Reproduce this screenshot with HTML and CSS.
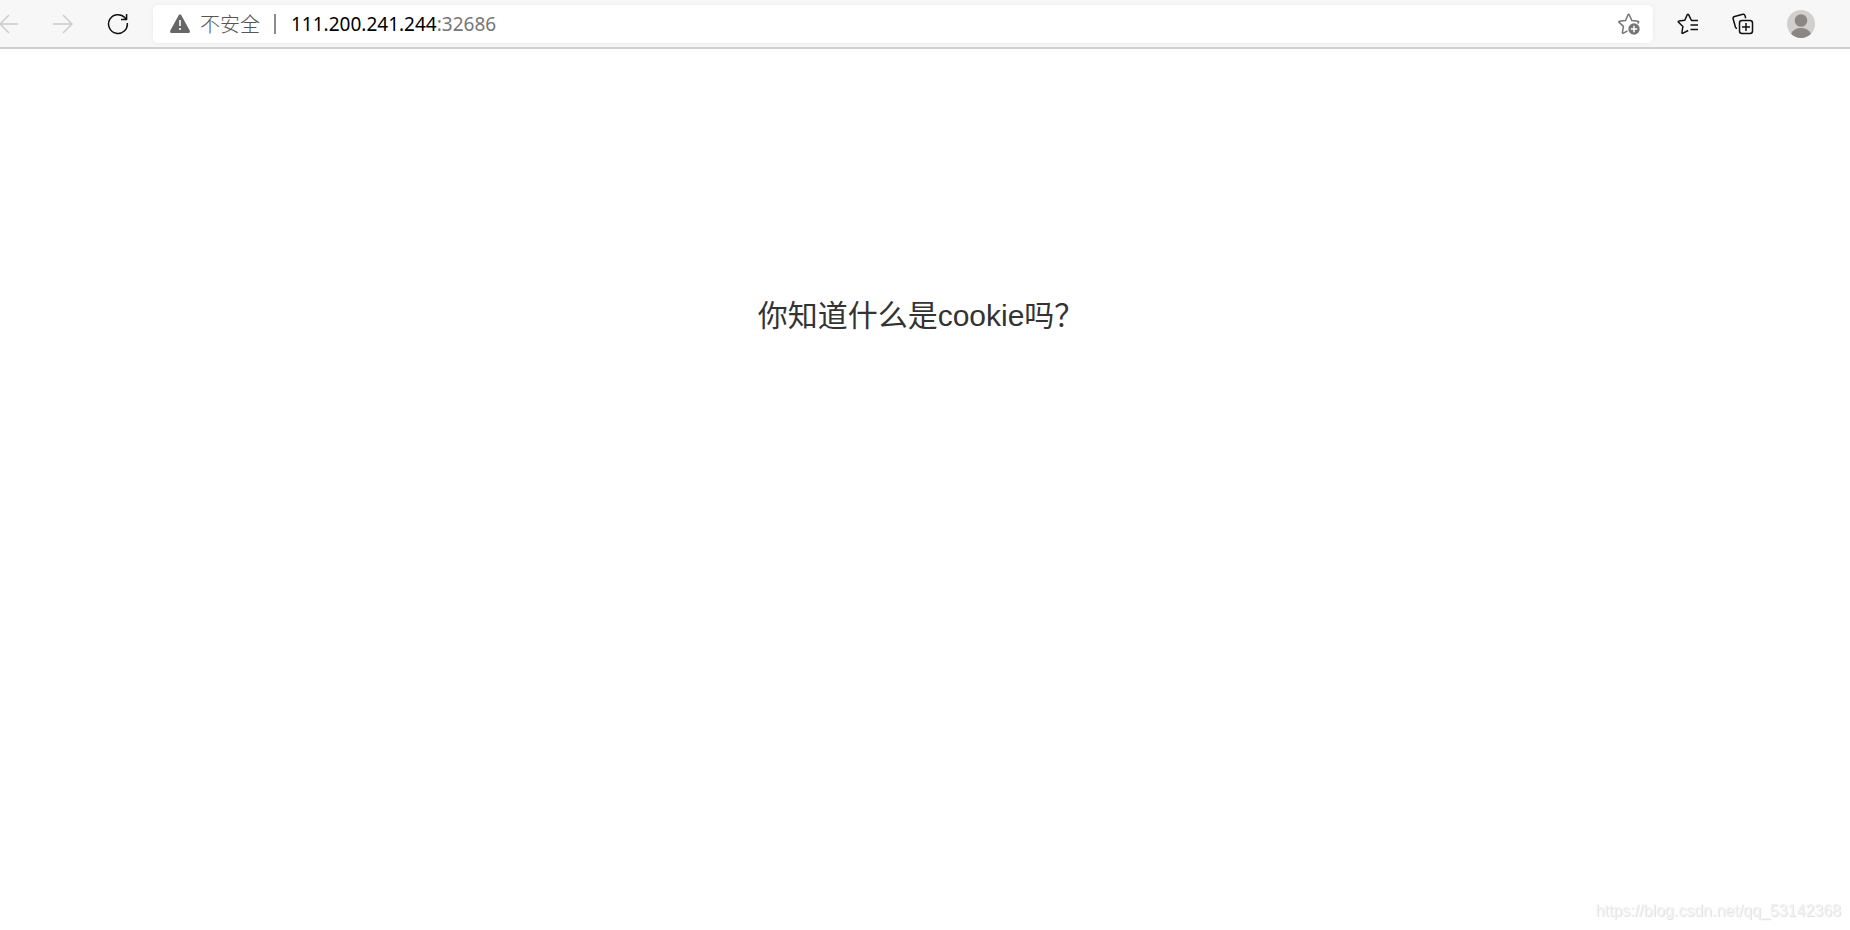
FILE: index.html
```html
<!DOCTYPE html>
<html lang="zh-CN">

<head>
    <meta charset="UTF-8">
    <meta name="viewport" content="width=device-width, initial-scale=1.0">
    <title>111.200.241.244:32686</title>
    <link rel="stylesheet" href="styles.css">
</head>

<body>

    <header class="toolbar">
        <nav class="nav-buttons">
            <button type="button" class="icon-btn disabled" aria-label="后退" disabled>
                <svg width="20" height="20" viewBox="0 0 20 20"><path d="M19 10H1M10 1L1 10l9 9"/></svg>
            </button>
            <button type="button" class="icon-btn disabled" aria-label="前进" disabled>
                <svg width="20" height="20" viewBox="0 0 20 20"><path d="M0 10h19M10 1l9 9-9 9"/></svg>
            </button>
            <button type="button" class="icon-btn" aria-label="刷新">
                <svg width="22" height="22" viewBox="0 0 22 22"><path d="M20.3 10A9.4 9.4 0 1 1 17.8 4.6L19.6 6.4M19.6 1v5.5H14"/></svg>
            </button>
        </nav>

        <div class="address-bar">
            <button type="button" class="site-info">
                <svg width="20" height="20" viewBox="0 0 20 20">
                    <path d="M8.7 1.2Q10 -.6 11.3 1.2L19.7 16.6Q20.4 19 18.5 19H1.5Q-.4 19 .3 16.6Z" fill="#666"/>
                    <path d="M10 6v6M10 14v2" stroke="#fff" stroke-width="1.6"/>
                </svg>
                <span>不安全</span>
            </button>
            <span class="divider"></span>
            <div class="url" role="textbox" aria-label="地址" contenteditable="true" spellcheck="false">111.200.241.244<span class="port">:32686</span></div>
            <button type="button" class="icon-btn star-add" aria-label="添加到收藏夹">
                <svg width="22" height="22" viewBox="0 0 22 22">
                    <path d="M19.6 10.5l1-1.4q.2-.8-.7-.9l-6-.6L11.2 1.7q-.6-1-1.2 0L7.5 7.6l-6 .7q-1.1.2-.4 1.1l4.4 4-1.1 6q0 1.2 1.1.7l4-2.2"/>
                    <circle cx="16" cy="16" r="5.7" fill="#767676" stroke="none"/>
                    <path d="M16 12.8v6.4M12.8 16h6.4" stroke="#fff"/>
                </svg>
            </button>
        </div>

        <div class="tools">
            <button type="button" class="icon-btn" aria-label="收藏夹">
                <svg width="22" height="22" viewBox="0 0 22 22">
                    <path d="M21 7.5h-6.5L11.6 1.7q-.7-1.1-1.4 0L7.8 7.3l-6 .8q-1.1.3-.3 1.2l4.4 4.2-1 6q0 1.2 1.1.7l5.2-2.7M13.5 12h7.5M13.5 16.5h7.5"/>
                </svg>
            </button>
            <button type="button" class="icon-btn" aria-label="集锦">
                <svg width="22" height="22" viewBox="0 0 22 22">
                    <rect x="7.5" y="7.5" width="13" height="13" rx="2.5"/>
                    <path d="M14 10v8M10 14h8M13.7 5.2l-.7-2.6q-.5-1.7-2.2-1.3L2.6 3.5Q.7 4 1.1 5.8l2.3 8.2q.4 1.2 1.6 1.5"/>
                </svg>
            </button>
            <button type="button" class="icon-btn" aria-label="个人资料">
                <svg width="28" height="28" viewBox="0 0 28 28">
                    <circle cx="14" cy="14" r="14" fill="#d2d0ce" stroke="none"/>
                    <circle cx="14" cy="10.5" r="6.3" fill="#8a8785" stroke="none"/>
                    <path d="M4 23.8q3-5.8 10-5.8t10 5.8a14 14 0 0 1-20 0z" fill="#8a8785" stroke="none"/>
                </svg>
            </button>
        </div>
    </header>

    <main class="content">
        <h1>你知道什么是cookie吗？</h1>
    </main>

    <div class="watermark">https://blog.csdn.net/qq_53142368</div>

</body>

</html>
```

FILE: styles.css
```css
* {
    box-sizing: border-box;
}

body {
    margin: 0;
    min-height: 100vh;
    background-color: #fff;
    color: #333;
    font-family: "Liberation Sans", "Noto Sans CJK SC", sans-serif;
}

button {
    padding: 0;
    border: none;
    background: none;
    font: inherit;
    color: inherit;
    cursor: pointer;
}

/* 浏览器工具栏 */
.toolbar {
    display: flex;
    align-items: center;
    height: 49px;
    background-color: #f7f7f7;
    border-bottom: 2px solid #d0d0d0;
    overflow: hidden;
}

.nav-buttons,
.tools {
    display: flex;
    flex: none;
    align-items: center;
}

.nav-buttons {
    gap: 34px;
    margin-left: -1px;
    padding-right: 24px;
}

.tools {
    gap: 33px;
    padding: 0 35px 0 24px;
}

.icon-btn {
    display: flex;
    flex: none;
    color: #111;
}

.icon-btn svg {
    fill: none;
    stroke: currentColor;
    stroke-width: 1.5;
    stroke-linejoin: round;
}

.icon-btn.disabled {
    color: #ccc;
    cursor: default;
}

/* 地址栏 */
.address-bar {
    display: flex;
    flex: 1;
    align-items: center;
    height: 38px;
    padding: 0 13px 0 17px;
    border-radius: 5px;
    background-color: #fff;
    box-shadow: 0 0 5px rgba(0, 0, 0, 0.06);
}

.site-info {
    display: flex;
    align-items: center;
    gap: 10px;
    color: #555;
    font-family: "Noto Sans CJK SC", sans-serif;
    font-size: 20px;
    font-weight: 300;
    line-height: 28px;
}

.divider {
    width: 2px;
    height: 20px;
    margin: 0 15px 0 14px;
    background-color: #8c8c8c;
}

.url {
    flex: 1;
    color: #000;
    font-family: "Noto Sans", sans-serif;
    font-size: 19px;
    line-height: 28px;
    outline: none;
}

.port {
    color: #767676;
}

.star-add {
    color: #767676;
}

/* 页面内容 */
.content {
    padding: 245px 8px 0 0;
    text-align: center;
}

h1 {
    margin: 0;
    font-size: 30px;
    font-weight: normal;
    line-height: 44px;
}

.watermark {
    position: fixed;
    right: 9px;
    bottom: 10px;
    color: #f3f3f3;
    font-size: 16px;
    line-height: 18px;
    text-shadow: 1px 1px 1px #dedede;
}
```
